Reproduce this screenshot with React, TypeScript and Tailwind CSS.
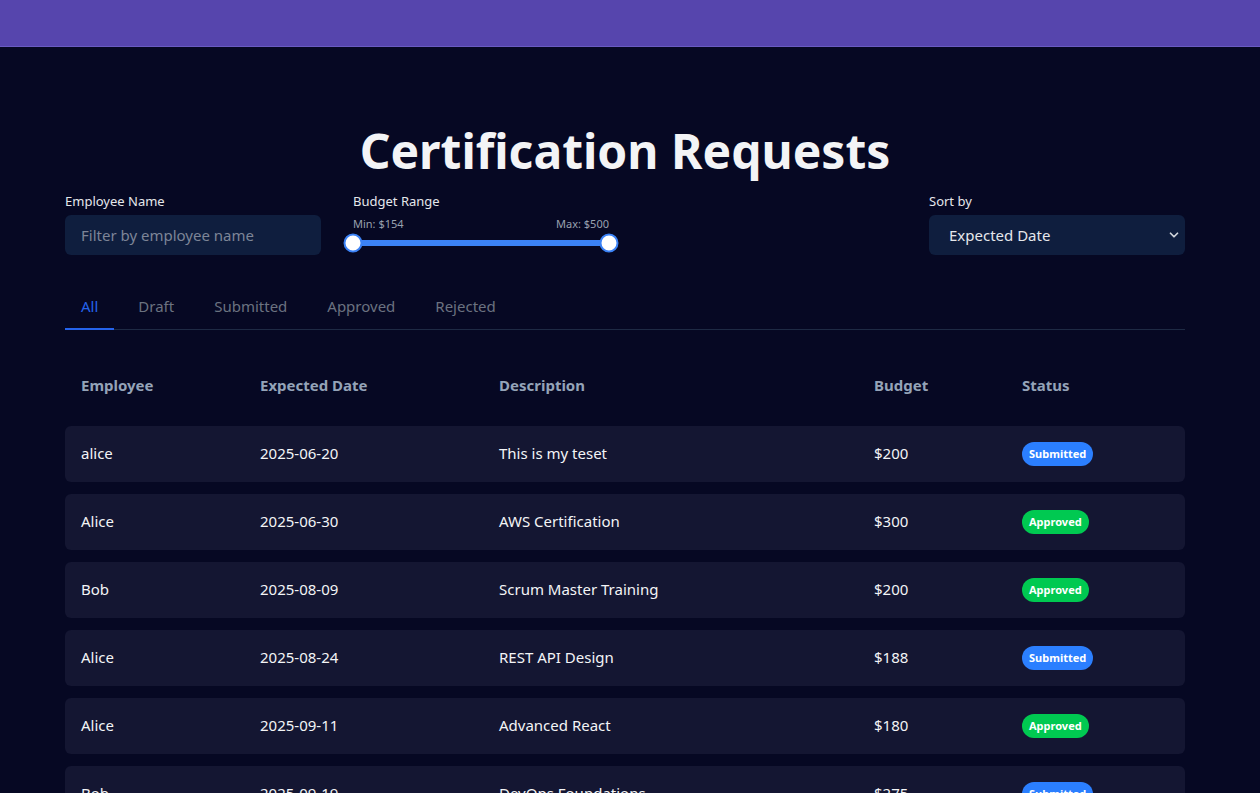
import { ChevronDown } from "lucide-react";

type Status = "Submitted" | "Approved" | "Draft" | "Rejected";

type Request = {
  employee: string;
  date: string;
  description: string;
  budget: number;
  status: Status;
};

const requests: Request[] = [
  { employee: "alice", date: "2025-06-20", description: "This is my teset", budget: 200, status: "Submitted" },
  { employee: "Alice", date: "2025-06-30", description: "AWS Certification", budget: 300, status: "Approved" },
  { employee: "Bob", date: "2025-08-09", description: "Scrum Master Training", budget: 200, status: "Approved" },
  { employee: "Alice", date: "2025-08-24", description: "REST API Design", budget: 188, status: "Submitted" },
  { employee: "Alice", date: "2025-09-11", description: "Advanced React", budget: 180, status: "Approved" },
  { employee: "Bob", date: "2025-09-19", description: "DevOps Foundations", budget: 275, status: "Submitted" },
];

const tabs = ["All", "Draft", "Submitted", "Approved", "Rejected"];

const gridCols = "grid grid-cols-[179px_239px_375px_148px_1fr] items-center";

function StatusBadge({ status }: { status: Status }) {
  const color =
    status === "Approved"
      ? "bg-green-500"
      : status === "Submitted"
      ? "bg-blue-500"
      : status === "Rejected"
      ? "bg-red-500"
      : "bg-gray-500";
  return (
    <span className={`inline-flex items-center h-6 px-[7px] rounded-full text-[11px] font-bold text-white ${color}`}>
      {status}
    </span>
  );
}

export default function App() {
  return (
    <div
      className="min-h-screen bg-[#060823] text-gray-100"
      style={{ fontFamily: '"Noto Sans", "Open Sans", sans-serif' }}
    >
      <header className="h-[47px] bg-[#5645ad] border-b border-[#6a5bc2]" />

      <div className="pr-[10px]">
        <main className="max-w-[1120px] mx-auto pt-[72px]">
          <h1 className="text-center text-[48px] leading-[64px] font-bold text-[#f3f4f6]">
            Certification Requests
          </h1>

          <div className="flex items-start gap-8 mt-[8px]">
            <div className="w-[256px]">
              <label className="block text-[13px] leading-5 text-gray-200 mb-[4px]">Employee Name</label>
              <input
                placeholder="Filter by employee name"
                className="w-full h-10 px-4 rounded-md bg-[#0f1e3e] text-[15px] text-gray-200 placeholder:text-[#7d8597] outline-none"
              />
            </div>

            <div className="w-[256px]">
              <label className="block text-[13px] leading-5 text-gray-200">Budget Range</label>
              <div className="flex justify-between text-[11px] leading-4 text-gray-400 mt-[5px]">
                <span>Min: $154</span>
                <span>Max: $500</span>
              </div>
              <div className="relative h-[6px] mt-[8px] rounded-full bg-[#3b82f6]">
                <span className="absolute left-0 top-1/2 -translate-x-1/2 -translate-y-1/2 w-[19px] h-[19px] rounded-full bg-white border-2 border-[#3b82f6]" />
                <span className="absolute right-0 top-1/2 translate-x-1/2 -translate-y-1/2 w-[19px] h-[19px] rounded-full bg-white border-2 border-[#3b82f6]" />
              </div>
            </div>

            <div className="w-[256px] ml-auto">
              <label className="block text-[13px] leading-5 text-gray-200 mb-[4px]">Sort by</label>
              <div className="relative">
                <select
                  defaultValue="date"
                  className="w-full h-10 pl-5 pr-8 rounded-md bg-[#0f1e3e] text-[15px] text-gray-200 appearance-none outline-none"
                >
                  <option value="date">Expected Date</option>
                  <option value="budget">Budget</option>
                  <option value="employee">Employee</option>
                </select>
                <ChevronDown
                  size={14}
                  strokeWidth={3}
                  className="absolute right-[4px] top-1/2 -translate-y-1/2 text-gray-300 pointer-events-none"
                />
              </div>
            </div>
          </div>

          <div className="flex gap-2 mt-[40px] border-b border-[#1e2a44]">
            {tabs.map((tab, i) => (
              <button
                key={tab}
                className={`px-4 pb-[10px] text-[15px] -mb-px border-b-2 ${
                  i === 0 ? "text-[#2563eb] border-[#2563eb]" : "text-[#6b7280] border-transparent"
                }`}
              >
                {tab}
              </button>
            ))}
          </div>

          <div className="mt-[28px] flex flex-col gap-3">
            <div className={`${gridCols} h-14 px-4 text-[15px] font-bold text-[#94a3b8]`}>
              <div>Employee</div>
              <div>Expected Date</div>
              <div>Description</div>
              <div>Budget</div>
              <div>Status</div>
            </div>
            {requests.map((r, i) => (
              <div key={i} className={`${gridCols} h-14 px-4 rounded-md bg-[#141632] text-[15px] text-gray-100`}>
                <div>{r.employee}</div>
                <div>{r.date}</div>
                <div>{r.description}</div>
                <div>${r.budget}</div>
                <div>
                  <StatusBadge status={r.status} />
                </div>
              </div>
            ))}
          </div>
        </main>
      </div>
    </div>
  );
}
